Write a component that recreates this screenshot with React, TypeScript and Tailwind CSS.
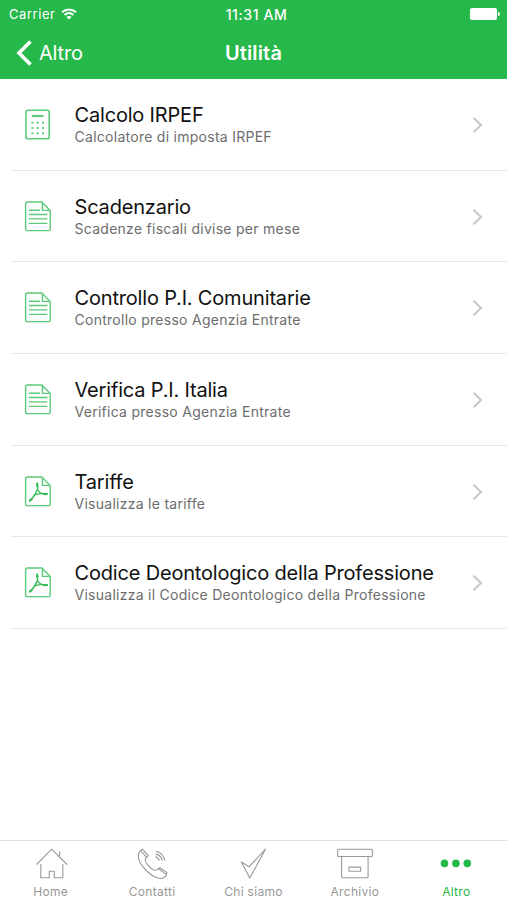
import type { ReactNode } from "react"

function CalculatorIcon() {
  return (
    <svg width="28" height="32" viewBox="0 0 28 32" fill="none" stroke="#5fca7b" strokeWidth="1.6">
      <rect x="2" y="1.2" width="23.2" height="28.6" rx="1.8" />
      <path d="M7.8 7h11.6" strokeWidth="2.2" />
      <path d="M7.4 13.8h12.6M7.4 19h12.6M7.4 24.3h12.6" strokeWidth="2" strokeDasharray="2 3.3" />
    </svg>
  )
}

function PageOutline() {
  return (
    <>
      <path d="M3.2 1.7h14.6l8.4 8.6v18.4a1.6 1.6 0 0 1-1.6 1.6H3.2a1.6 1.6 0 0 1-1.6-1.6V3.3a1.6 1.6 0 0 1 1.6-1.6Z" />
      <path d="M18.4 2.2v7.9h7.4" />
    </>
  )
}

function DocumentIcon() {
  return (
    <svg width="28" height="32" viewBox="0 0.7 28 32" fill="none" stroke="#5cca78" strokeWidth="1.4">
      <PageOutline />
      <path d="M4.8 9.9h11M4.8 14.2h18.6M4.8 18.6h18.6M4.8 23.1h18.6" />
    </svg>
  )
}

function PdfIcon() {
  return (
    <svg width="28" height="32" viewBox="0 0.7 28 32" fill="none" stroke="#5cca78" strokeWidth="1.4">
      <PageOutline />
      <g stroke="#35bc58" strokeLinecap="round" strokeLinejoin="round">
        <path d="M13.4 14.6 10.6 19.600 16.800 18Z" strokeWidth="1.3" />
        <path d="M13.400 14.600c.3-1.800.3-3.500 0-5.200M16.800 18c1.900.7 3.600.9 5.300.8M10.600 19.600c-1.200 2.200-2.500 3.900-4.200 5.200" strokeWidth="1.500" />
        <path d="M13.200 8.400v2.200M20.600 18.900l2.500-.2M7.600 23.900l-1.800 1.400" strokeWidth="2.200" />
      </g>
    </svg>
  )
}

function HomeIcon() {
  return (
    <>
      <path d="M3.6 18.5 18.6 3.2l15.5 15.300M26.600 10.500V5.200" />
      <path d="M7.800 18.200v13.600h8.500v-6.600h5v6.600h8.500V18.200" />
    </>
  )
}

function PhoneIcon() {
  return (
    <>
      <path d="M8.500 3.200 14.300 9.800 11.400 12.500c-.5 1.500.5 4 2.200 6.200 1.800 2.400 4.300 4.600 6.300 5.300 1.400.5 2.400.3 3.300-.4l2.700-1.900 7 4.700c-.3 2.600-2.200 5-4.500 5.800-3.800 1.300-10.500-1.900-15.600-7.200C7.600 19.900 4 14.200 4.300 9.700 4.400 7 6 4.400 8.500 3.200Z" />
      <path d="m6.600 4.700 6.100 6.600M24.600 22.800l7.100 5.100" />
      <path d="M21.900 5.400c4.700.7 8.200 4.500 8.900 9.200M21.600 8.100c3.500.6 6 3.100 6.500 6.500M21.300 10.800c2.200.5 3.500 1.700 4 3.800" />
    </>
  )
}

function CheckIcon() {
  return <path d="M30.500 3.200 14.800 32 6.300 16l7.700 4.800Z" strokeLinejoin="round" />
}

function ArchiveIcon() {
  return (
    <>
      <rect x=".6" y="3.2" width="34.8" height="7.3" rx="1" />
      <path d="M4.6 10.500v20.200a1 1 0 0 0 1 1h24.500a1 1 0 0 0 1-1V10.500" />
      <rect x="11.9" y="21.1" width="11.8" height="4.2" rx=".4" />
    </>
  )
}

function DotsIcon() {
  return (
    <g fill="#26b84a" stroke="none">
      <circle cx="6.5" cy="17.4" r="3.8" />
      <circle cx="17.9" cy="17.4" r="3.8" />
      <circle cx="29.3" cy="17.4" r="3.8" />
    </g>
  )
}

interface Item {
  title: string
  subtitle: string
  icon: ReactNode
}

const items: Item[] = [
  { title: "Calcolo IRPEF", subtitle: "Calcolatore di imposta IRPEF", icon: <CalculatorIcon /> },
  { title: "Scadenzario", subtitle: "Scadenze fiscali divise per mese", icon: <DocumentIcon /> },
  { title: "Controllo P.I. Comunitarie", subtitle: "Controllo presso Agenzia Entrate", icon: <DocumentIcon /> },
  { title: "Verifica P.I. Italia", subtitle: "Verifica presso Agenzia Entrate", icon: <DocumentIcon /> },
  { title: "Tariffe", subtitle: "Visualizza le tariffe", icon: <PdfIcon /> },
  {
    title: "Codice Deontologico della Professione",
    subtitle: "Visualizza il Codice Deontologico della Professione",
    icon: <PdfIcon />,
  },
]

const tabs = [
  { label: "Home", icon: <HomeIcon /> },
  { label: "Contatti", icon: <PhoneIcon /> },
  { label: "Chi siamo", icon: <CheckIcon /> },
  { label: "Archivio", icon: <ArchiveIcon /> },
  { label: "Altro", icon: <DotsIcon />, active: true },
]

function Header() {
  return (
    <header className="h-[79px] bg-[#26b84a] text-white">
      <div className="grid h-[27px] grid-cols-3 items-center pr-[7px] pl-[9px] text-[13px]">
        <div className="flex items-center gap-[6px]">
          <span className="pt-[2px] tracking-[0.55px]">Carrier</span>
          <svg width="16" height="12" viewBox="0 0 16 12" fill="none" stroke="white" strokeWidth="1.9">
            <path d="M1 4.300c4-3.700 10-3.700 14 0M3.500 7c2.700-2.400 6.300-2.400 9 0" />
            <path d="M8 11.600 5.400 9c1.500-1.300 3.700-1.300 5.200 0Z" fill="white" stroke="none" />
          </svg>
        </div>
        <span className="pt-[2px] pl-[4px] text-center text-[14px] font-medium tracking-[0.6px]">11:31 AM</span>
        <div className="flex items-center justify-end gap-px">
          <div className="h-[12px] w-[27px] rounded-[2px] bg-white" />
          <div className="h-[4px] w-[2px] rounded-r-full bg-white" />
        </div>
      </div>
      <div className="grid h-[51px] grid-cols-3 items-center px-4">
        <div className="flex items-center gap-[7px]">
          <svg width="16" height="26" viewBox="0 0 16 26" fill="none" stroke="white" strokeWidth="3.6">
            <path d="M14.500 1.500 3 13l11.500 11.500" />
          </svg>
          <span className="text-[20px] tracking-[-0.2px]">Altro</span>
        </div>
        <h1 className="text-center text-[20px] font-semibold tracking-[0.15px]">Utilità</h1>
      </div>
    </header>
  )
}

function Row({ title, subtitle, icon }: Item) {
  return (
    <li className="ml-[11px] flex h-[91.67px] items-center border-b border-[#e6e6e8] pt-[1.4px] pr-[24px]">
      <div className="w-[63.5px] pl-[12.5px]">{icon}</div>
      <div className="flex-1 whitespace-nowrap">
        <div className="text-[20px] leading-[24px] tracking-[-0.18px] text-[#111]">{title}</div>
        <div className="text-[14px] leading-[20px] tracking-[0.27px] text-[#6d6d6d]">{subtitle}</div>
      </div>
      <svg width="11" height="18" viewBox="0 0 11 18" fill="none" stroke="#c7c7cb" strokeWidth="2">
        <path d="m1.500 1.800 7.500 7.200-7.500 7.200" />
      </svg>
    </li>
  )
}

function TabBar() {
  return (
    <nav className="grid h-[60px] grid-cols-5 border-t border-[#dedede] pt-[5px]">
      {tabs.map((tab) => (
        <div key={tab.label} className="flex flex-col items-center">
          <svg width="36" height="36" viewBox="0 0 36 36" fill="none" stroke="#999" strokeWidth="1.1">
            {tab.icon}
          </svg>
          <span
            className={
              tab.active
                ? "mt-[2px] text-[12px] leading-[16px] tracking-[0.3px] text-[#26b84a]"
                : "mt-[2px] text-[12px] leading-[16px] tracking-[0.3px] text-[#989898]"
            }
          >
            {tab.label}
          </span>
        </div>
      ))}
    </nav>
  )
}

export default function App() {
  return (
    <div className="flex h-screen flex-col overflow-hidden bg-white font-['Inter','Liberation_Sans',sans-serif]">
      <Header />
      <ul className="flex-1">
        {items.map((item) => (
          <Row key={item.title} {...item} />
        ))}
      </ul>
      <TabBar />
    </div>
  )
}
